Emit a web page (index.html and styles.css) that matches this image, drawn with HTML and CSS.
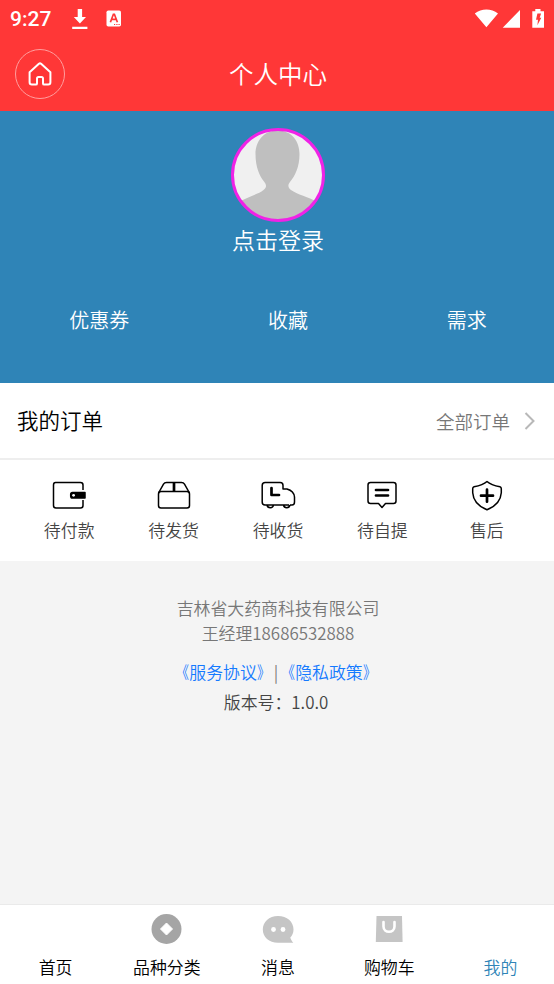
FILE: index.html
```html
<!DOCTYPE html>
<html lang="zh-CN">
<head>
<meta charset="utf-8">
<title>个人中心</title>
<link rel="stylesheet" href="styles.css">
</head>
<body>
<div class="app">
  <header class="header">
    <div class="status">
      <span class="clock">9:27</span>
      <svg class="download" width="16" height="22" viewBox="0 0 16 22" fill="#fff"><path d="M5.700 1h4.400v8h3.900l-6.100 6.500L1.800 9h3.900zM.2 18.700h15.200v2.200H.2z"/></svg>
      <svg class="keyboard" width="16" height="17" viewBox="0 0 16 17"><rect x=".5" y=".5" width="14.500" height="16" rx="1.800" fill="#fff"/><path d="M4.400 12.200 7.400 4.300h1l3 7.900M5.500 9.300h4.800" fill="none" stroke="#ff3737" stroke-width="1.700"/><path d="M8 14.500h1.200M10.300 14.500h1.200M12.500 14.500h1.200" stroke="#ff3737" stroke-width="1.200"/></svg>
      <svg class="signals" width="72" height="22" viewBox="0 0 72 22" fill="#fff"><path d="M.8 5.500C7.500.2 17.300.2 24 5.500L12.400 19.200zM46 2v17.700H28.700zM58.300 3.200h3V1h5.200v2.200H70v16.500H58.300z"/><path d="M63.400 5.500h3.700l-1.400 4.200h1.600l-3.900 7.600.6-5.500h-2z" fill="#ff3737"/></svg>
    </div>
    <div class="navbar">
      <a class="home"><svg width="26" height="26" viewBox="0 0 26 26" fill="none" stroke="#fff" stroke-width="2" stroke-linejoin="round"><path d="M2.600 11.200 11.900 2.800Q13 1.900 14.100 2.800l9.300 8.400V21.300Q23.400 23.600 21.100 23.600H17.200Q16 23.600 16 22.400V17.500Q16 16 14.500 16h-3Q10 16 10 17.500v4.900Q10 23.600 8.800 23.600H4.900Q2.600 23.600 2.600 21.300z"/></svg></a>
      <h1 class="title">个人中心</h1>
    </div>
  </header>

  <section class="profile">
    <svg class="avatar" width="94" height="94" viewBox="0 0 94 94"><defs><clipPath id="face"><circle cx="47" cy="47" r="45"/></clipPath></defs><circle cx="47" cy="47" r="45" fill="#f0f0f0"/><path clip-path="url(#face)" d="M46.500 2.500C32 2.500 24.500 14 24.500 26c0 13 4 22 8.500 27.500 2.800 3.500 2.700 6-.5 8.500C27 66.500 17 68.500 6 75v19h82V75C77 68.500 66 66.500 60 62c-3.200-2.500-3.500-5-.7-8.500C64 48 68.500 39 68.500 26 68.500 14 61.500 2.500 46.500 2.500z" fill="#bfbfbf"/><circle cx="47" cy="47" r="45.500" fill="none" stroke="#f022e6" stroke-width="3"/></svg>
    <div class="login">点击登录</div>
    <div class="stats"><span>优惠券</span><span>收藏</span><span>需求</span></div>
  </section>

  <section class="orders-head">
    <h2 class="orders-title">我的订单</h2>
    <span class="all">全部订单</span>
    <svg width="12" height="20" viewBox="0 0 12 20" fill="none" stroke="#b8b8b8" stroke-width="2"><path d="M1.500 2 9.500 10 1.500 18"/></svg>
  </section>

  <section class="orders">
    <div class="order"><svg viewBox="0 0 36 32"><path d="M32 10V5q0-2.500-2.500-2.500h-25Q2.500 2.500 2.500 5v20.500Q2.500 28 5 28h24.500q2.500 0 2.500-2.500V20"/><path class="solid" d="M21.500 12.500H34v5.500H21.500q-1.800 0-1.800-1.800v-1.900q0-1.800 1.800-1.800z"/><circle cx="22.600" cy="15.300" r="1.400" fill="#fff" stroke="none"/></svg><span>待付款</span></div>
    <div class="order"><svg viewBox="0 0 36 32"><rect x="2.500" y="11.500" width="31" height="16.500" rx="2.500"/><path d="M2.500 13 7.500 4.200Q8.500 2.500 10.500 2.500h15q2 0 3 1.700l5 8.800"/><path class="bold flat" d="M18 2.500v9"/></svg><span>待发货</span></div>
    <div class="order"><svg viewBox="0 0 36 32"><path d="M7 25H5q-2.800 0-2.800-3V5.500q0-3 3-3h15q2.800 0 2.800 3V9h4q7 2 7.500 8v5q0 3-2.500 3h-2M7 25h22M7 25q.5 2.700 3.300 2.700t3.200-2.700M23.500 25q.5 2.700 3.200 2.700t3.200-2.700"/><path class="bold" d="M11.500 8v7h7.500"/></svg><span>待收货</span></div>
    <div class="order"><svg viewBox="0 0 36 32"><path d="M6.500 2.500h23q2.500 0 2.500 2.500v16q0 2.500-2.500 2.500h-8L18 27.500l-3.500-4h-8Q4 23.500 4 21V5q0-2.500 2.500-2.500z"/><path class="bold" d="M12 10h12M12 15.500h12"/></svg><span>待自提</span></div>
    <div class="order"><svg viewBox="0 0 36 32"><path d="M18 1.500C22 5 27 6 31 6.800q1.300.3 1.300 2v4Q31.500 24.500 18 29.800 4.500 24.500 3.700 12.800v-4q0-1.700 1.300-2C9 6 14 5 18 1.500z"/><path class="bold" d="M12 15.700h12M18 9.700v12"/></svg><span>售后</span></div>
  </section>

  <main class="about">
    <p class="company">吉林省大药商科技有限公司</p>
    <p class="company">王经理18686532888</p>
    <p class="legal"><a><span class="open">《</span>服务协议<span class="close">》</span></a>|<a><span class="open">《</span>隐私政策<span class="close">》</span></a></p>
    <p class="version">版本号：1.0.0</p>
  </main>

  <nav class="tabbar">
    <a class="tab"><span class="tab-icon"></span>首页</a>
    <a class="tab"><svg class="tab-icon" viewBox="0 0 34 34"><circle cx="16.500" cy="17" r="15" fill="#a5a5a5"/><path d="m16.500 11 6 6-6 6-6-6z" fill="#fff" stroke="#fff" stroke-linejoin="round"/></svg>品种分类</a>
    <a class="tab"><svg class="tab-icon" viewBox="0 0 34 34"><path d="M17 4c9 0 15.500 5.800 15.500 13.500 0 3.500-1.300 6-3.200 8 .4 1.800 1.400 3.400 3 5.300H17C8 30.800 1.800 25 1.800 17.500S8 4 17 4z" fill="#c5c5c5"/><circle cx="12.500" cy="17.500" r="2.400" fill="#fff"/><circle cx="22" cy="17.500" r="2.400" fill="#fff"/></svg>消息</a>
    <a class="tab"><svg class="tab-icon" viewBox="0 0 34 34"><path d="M4.500 4h25.500l.6 26H3.800z" fill="#c5c5c5"/><path d="M11.500 10v4.500c0 7 11 7 11 0V10" fill="none" stroke="#fff" stroke-width="2.600" stroke-linecap="round"/></svg>购物车</a>
    <a class="tab active"><span class="tab-icon"></span>我的</a>
  </nav>
</div>
</body>
</html>
```
FILE: styles.css
```css
* { box-sizing: border-box; }
html { overflow: hidden; }
body {
  margin: 0;
  font-family: "Noto Sans CJK SC", sans-serif;
  font-size: 16.9px;
  font-weight: 350;
  color: #000;
  background: #f4f4f4;
}
h1, h2, p { margin: 0; font-weight: inherit; }
svg { display: block; flex: none; }
.app { width: 556px; height: 984px; display: flex; flex-direction: column; overflow: hidden; }

.header { height: 111px; flex: none; background: #ff3737; color: #fff; }
.status { height: 37px; padding: 0 10px; display: flex; align-items: center; }
.clock { width: 62px; font: 500 21px/37px Roboto, sans-serif; padding-top: 2px; }
.keyboard { margin-left: 18px; }
.download { margin-top: 1px; }
.signals { margin-left: auto; }
.navbar { height: 74px; padding: 0 15px; display: grid; grid-template-columns: 50px 1fr 50px; }
.home {
  width: 50px; height: 50px; margin-top: 12px;
  border: 1.5px solid #ff9e9e; border-radius: 50%;
  display: flex; align-items: center; justify-content: center;
}
.title { font-size: 24.5px; line-height: 74px; text-align: center; }

.profile {
  height: 272px; flex: none; padding-top: 17px;
  background: #2f84b7; color: #fff;
  display: flex; flex-direction: column; align-items: center;
}
.login { font-size: 23px; line-height: 34px; }
.stats { width: 100%; margin-top: 49px; display: flex; justify-content: space-around; font-size: 20px; line-height: 30px; }

.orders-head {
  height: 77px; flex: none; padding: 0 20px 0 17px;
  display: flex; align-items: center;
  background: #fff; border-bottom: 2px solid #eee;
}
.orders-title { font-size: 21.5px; line-height: 32px; margin-top: -1px; }
.all { margin-left: auto; margin-right: 14px; font-size: 18.5px; line-height: 28px; color: #777; }

.orders { height: 101px; flex: none; padding: 20px 17px 0; display: flex; background: #fff; }
.order { flex: 1; display: flex; flex-direction: column; align-items: center; line-height: 26px; color: #444; }
.order svg { width: 36px; height: 32px; margin-bottom: 5px; fill: none; stroke: #000; stroke-width: 1.5; stroke-linejoin: round; }
.order .bold { stroke-width: 2.7; stroke-linecap: round; }
.order .flat { stroke-linecap: butt; }
.order .solid { fill: #000; }

.about { flex: 1; padding-top: 34px; text-align: center; }
.company { line-height: 25px; color: #777; }
.legal { margin: 12px 4px 0 0; line-height: 30px; color: #777; }
.legal a { color: #147aff; }
.open, .close { display: inline-block; transform: scaleX(.78); }
.open { transform-origin: right; }
.close { transform-origin: left; }
.version { margin-right: 4px; line-height: 29px; color: #444; }

.tabbar { height: 80px; flex: none; display: flex; background: #fff; border-top: 1.5px solid #eaeaea; }
.tab { flex: 1; padding-top: 7px; display: flex; flex-direction: column; align-items: center; line-height: 26px; }
.tab-icon { width: 34px; height: 34px; flex: none; margin-bottom: 8px; }
.active { color: #2f84b7; }
```
